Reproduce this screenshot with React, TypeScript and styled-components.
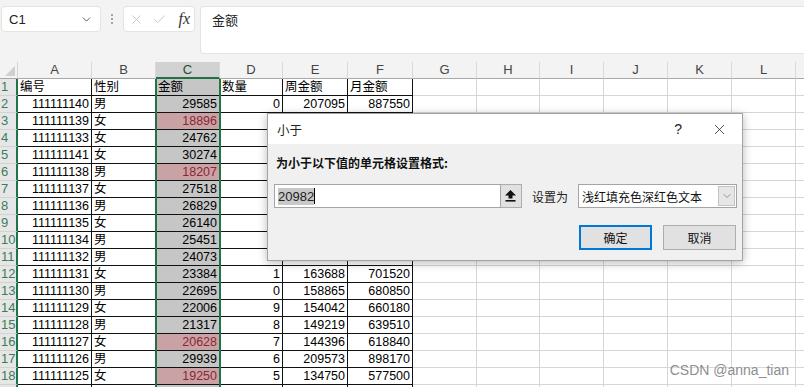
import React from 'react'
import styled, { createGlobalStyle } from 'styled-components'
import { ChevronDown, X, Check } from 'lucide-react'

const GlobalStyle = createGlobalStyle`
  html, body {
    margin: 0;
    padding: 0;
    background: #ffffff;
    overflow: hidden;
  }
  body {
    font-family: "Liberation Sans", "Noto Sans CJK SC", sans-serif;
  }
`

const COLS = [18, 74, 64, 64, 63, 65, 65, 64, 63, 64, 64, 64, 64, 20]
const LETTERS = ['A', 'B', 'C', 'D', 'E', 'F', 'G', 'H', 'I', 'J', 'K', 'L', '']
const HEADS = ['编号', '性别', '金额', '数量', '周金额', '月金额']

const ids = [140, 139, 133, 141, 138, 137, 136, 135, 134, 132, 131, 130, 129, 128, 127, 126, 125]
const sexes = ['男', '女', '女', '女', '男', '女', '男', '女', '男', '男', '女', '男', '女', '男', '女', '男', '女']
const amounts = [29585, 18896, 24762, 30274, 18207, 27518, 26829, 26140, 25451, 24073, 23384, 22695, 22006, 21317, 20628, 29939, 19250]
const qty = [0, 0, 9, 8, 7, 6, 5, 4, 3, 2, 1, 0, 9, 8, 7, 6, 5]

// rows 3..10 of D-F sit fully under the dialog
const hidden = (r: number) => r >= 1 && r <= 8

type Fill = 'none' | 'sel' | 'red'

export default function App() {
  return (
    <Page>
      <GlobalStyle />
      <FormulaBar>
        <NameBox>
          <span>C1</span>
          <ChevronDown size={13} strokeWidth={1.6} color="#444" />
        </NameBox>
        <Dots>
          <i />
          <i />
          <i />
        </Dots>
        <FxBox>
          <X size={15} strokeWidth={1.3} color="#bdbdbd" />
          <Check size={15} strokeWidth={1.3} color="#bdbdbd" />
          <Fx>fx</Fx>
        </FxBox>
        <FormulaInput>金额</FormulaInput>
      </FormulaBar>

      <SheetArea>
        <Grid>
          <Corner>
            <svg width="10" height="10" viewBox="0 0 10 10">
              <polygon points="10,0 10,10 0,10" fill="#cfcfcf" />
            </svg>
          </Corner>
          {LETTERS.map((l, i) => (
            <ColHead key={l + i} $active={l === 'C'}>
              {l}
            </ColHead>
          ))}

          <RowHead>1</RowHead>
          {HEADS.map((h, i) => (
            <Cell key={h} $dark $fill={i === 2 ? 'sel' : 'none'}>
              {h}
            </Cell>
          ))}
          {LETTERS.slice(6).map((l, i) => (
            <Cell key={'e1' + i} />
          ))}

          {ids.map((id, r) => {
            const amt = amounts[r]
            const fill: Fill = amt < 20982 ? 'red' : 'sel'
            const under = hidden(r)
            return (
              <React.Fragment key={id}>
                <RowHead>{r + 2}</RowHead>
                <Cell $dark $right>
                  {'111111' + id}
                </Cell>
                <Cell $dark>{sexes[r]}</Cell>
                <Cell $dark $right $fill={fill}>
                  {amt}
                </Cell>
                <Cell $dark $right>
                  {under ? '' : qty[r]}
                </Cell>
                <Cell $dark $right>
                  {under ? '' : amt * 7}
                </Cell>
                <Cell $dark $right>
                  {under ? '' : amt * 30}
                </Cell>
                {LETTERS.slice(6).map((l, i) => (
                  <Cell key={'e' + r + i} />
                ))}
              </React.Fragment>
            )
          })}

          <RowHead />
          {HEADS.map((h, i) => (
            <Cell key={'r19' + h} $dark $fill={i === 2 ? 'sel' : 'none'} />
          ))}
          {LETTERS.slice(6).map((l, i) => (
            <Cell key={'e19' + i} />
          ))}
        </Grid>

        <Selection />

        <Dialog>
          <TitleBar>
            <Title>小于</Title>
            <TitleButtons>
              <Help>?</Help>
              <X size={17} strokeWidth={1.1} color="#222" />
            </TitleButtons>
          </TitleBar>
          <DialogBody>
            <Prompt>为小于以下值的单元格设置格式:</Prompt>
            <FieldRow>
              <ValueInput>
                <Selected>20982</Selected>
                <Caret />
              </ValueInput>
              <PickButton>
                <svg width="11" height="12" viewBox="0 0 11 12">
                  <polygon points="5.5,0 11,5.5 7.5,5.5 7.5,8.5 3.5,8.5 3.5,5.5 0,5.5" fill="#111" />
                  <rect x="0.5" y="10" width="10" height="1.6" fill="#111" />
                </svg>
              </PickButton>
              <FieldLabel>设置为</FieldLabel>
              <SelectBox>
                <span>浅红填充色深红色文本</span>
                <SelectArrow>
                  <ChevronDown size={12} strokeWidth={1.3} color="#666" />
                </SelectArrow>
              </SelectBox>
            </FieldRow>
            <ButtonRow>
              <DialogButton $primary>确定</DialogButton>
              <DialogButton>取消</DialogButton>
            </ButtonRow>
          </DialogBody>
        </Dialog>

        <Watermark>CSDN @anna_tian</Watermark>
      </SheetArea>
    </Page>
  )
}

const Page = styled.div`
  width: 804px;
  height: 387px;
  overflow: hidden;
  background: #ffffff;
`

const FormulaBar = styled.div`
  height: 62px;
  box-sizing: border-box;
  background: #f3f3f3;
  display: flex;
  align-items: flex-start;
  padding: 6px 0 0 1px;
`

const NameBox = styled.div`
  width: 100px;
  height: 26px;
  box-sizing: border-box;
  background: #fff;
  border: 1px solid #e3e3e3;
  border-radius: 4px;
  display: flex;
  align-items: center;
  justify-content: space-between;
  padding: 0 7px 0 7px;
  font-size: 13px;
  color: #222;
`

const Dots = styled.div`
  width: 22px;
  height: 26px;
  display: flex;
  flex-direction: column;
  align-items: center;
  justify-content: center;
  gap: 2px;

  i {
    width: 2px;
    height: 2px;
    background: #8a8a8a;
    border-radius: 1px;
  }
`

const FxBox = styled.div`
  width: 72px;
  height: 26px;
  box-sizing: border-box;
  background: #fff;
  border: 1px solid #e3e3e3;
  border-radius: 4px;
  display: flex;
  align-items: center;
  padding: 0 4px 0 5px;
  gap: 8px;
`

const Fx = styled.span`
  font-family: "Liberation Serif", serif;
  font-style: italic;
  font-size: 16px;
  color: #333;
  margin-left: auto;
`

const FormulaInput = styled.div`
  margin-left: 5px;
  flex: 1;
  height: 48px;
  box-sizing: border-box;
  background: #fff;
  border: 1px solid #e3e3e3;
  border-right: none;
  border-radius: 4px 0 0 4px;
  padding: 3px 0 0 11px;
  font-size: 13px;
  color: #222;
  font-family: "Noto Sans CJK SC", sans-serif;
`

const SheetArea = styled.div`
  position: relative;
`

const Grid = styled.div`
  display: grid;
  grid-template-columns: ${COLS.map((c) => c + 'px').join(' ')};
  grid-auto-rows: 17px;
`

const Corner = styled.div`
  background: #f3f3f3;
  border-bottom: 1px solid #a9a9a9;
  border-right: 1px solid #d5d5d5;
  box-sizing: border-box;
  display: flex;
  align-items: flex-end;
  justify-content: flex-end;
  padding: 0 2px 2px 0;
`

const ColHead = styled.div<{ $active?: boolean }>`
  box-sizing: border-box;
  background: ${(p) => (p.$active ? '#d2d2d2' : '#f3f3f3')};
  border-right: 1px solid #d9d9d9;
  border-bottom: ${(p) => (p.$active ? '2px solid #217346' : '1px solid #a9a9a9')};
  color: ${(p) => (p.$active ? '#1f4e35' : '#444')};
  font-size: 13px;
  line-height: 16px;
  text-align: center;
`

const RowHead = styled.div`
  box-sizing: border-box;
  background: #e6e6e6;
  border-right: 2px solid #217346;
  border-bottom: 1px solid #d2d2d2;
  color: #3a7d5c;
  font-size: 13px;
  line-height: 16px;
  padding-left: 1px;
  overflow: hidden;
  white-space: nowrap;
`

const Cell = styled.div<{ $dark?: boolean; $right?: boolean; $fill?: Fill }>`
  box-sizing: border-box;
  border-right: 1px solid ${(p) => (p.$dark ? '#111' : '#d6d6d6')};
  border-bottom: 1px solid ${(p) => (p.$dark ? '#111' : '#d6d6d6')};
  background: ${(p) => (p.$fill === 'red' ? '#c9a2a6' : p.$fill === 'sel' ? '#c6c6c6' : '#fff')};
  color: ${(p) => (p.$fill === 'red' ? '#8c2632' : '#000')};
  font-size: 12.5px;
  line-height: 16px;
  padding: 0 2px;
  text-align: ${(p) => (p.$right ? 'right' : 'left')};
  white-space: nowrap;
  overflow: hidden;
`

const Selection = styled.div`
  position: absolute;
  left: 155px;
  top: 17px;
  width: 66px;
  bottom: -10px;
  box-sizing: border-box;
  border-left: 2px solid #217346;
  border-right: 2px solid #217346;
  pointer-events: none;
`

const Dialog = styled.div`
  position: absolute;
  left: 267px;
  top: 51px;
  width: 476px;
  height: 148px;
  box-sizing: border-box;
  background: #f0f0f0;
  border: 1px solid #a3a3a3;
  box-shadow: 0 2px 9px rgba(0, 0, 0, 0.28);
  display: flex;
  flex-direction: column;
  font-family: "Noto Sans CJK SC", sans-serif;
  font-size: 12px;
  color: #111;
`

const TitleBar = styled.div`
  height: 30px;
  background: #fff;
  display: flex;
  align-items: center;
  justify-content: space-between;
  padding: 0 14px 0 9px;
`

const Title = styled.span`
  font-size: 12.5px;
  color: #222;
`

const TitleButtons = styled.div`
  display: flex;
  align-items: center;
  gap: 29px;
`

const Help = styled.span`
  font-family: "Liberation Sans", sans-serif;
  font-size: 14px;
  color: #222;
`

const DialogBody = styled.div`
  flex: 1;
  display: flex;
  flex-direction: column;
  padding: 10px 5px 0 6px;
`

const Prompt = styled.div`
  font-weight: bold;
  font-size: 12px;
  line-height: 17px;
  padding-left: 2px;
`

const FieldRow = styled.div`
  display: flex;
  align-items: center;
  margin-top: 13px;
  height: 24px;
`

const ValueInput = styled.div`
  width: 227px;
  height: 24px;
  box-sizing: border-box;
  background: #fff;
  border: 1px solid #a5a5a5;
  display: flex;
  align-items: center;
  padding-left: 3px;
`

const Selected = styled.span`
  font-family: "Liberation Sans", sans-serif;
  font-size: 13px;
  line-height: 17px;
  background: #c8c8c8;
  color: #222;
`

const Caret = styled.span`
  width: 1px;
  height: 16px;
  background: #000;
`

const PickButton = styled.div`
  width: 21px;
  height: 24px;
  box-sizing: border-box;
  background: #e1e1e1;
  border: 1px solid #adadad;
  border-left: none;
  display: flex;
  align-items: center;
  justify-content: center;
`

const FieldLabel = styled.span`
  margin: 0 10px 0 10px;
  color: #222;
`

const SelectBox = styled.div`
  width: 159px;
  height: 24px;
  box-sizing: border-box;
  background: #fff;
  border: 1px solid #a5a5a5;
  display: flex;
  align-items: center;
  justify-content: space-between;
  padding: 0 1px 0 3px;
`

const SelectArrow = styled.div`
  width: 17px;
  height: 20px;
  box-sizing: border-box;
  background: #e6e6e6;
  border: 1px solid #c4c4c4;
  display: flex;
  align-items: center;
  justify-content: center;
`

const ButtonRow = styled.div`
  display: flex;
  justify-content: flex-end;
  gap: 11px;
  margin-top: 17px;
  padding-right: 1px;
`

const DialogButton = styled.div<{ $primary?: boolean }>`
  width: 73px;
  height: 25px;
  box-sizing: border-box;
  background: #e1e1e1;
  border: ${(p) => (p.$primary ? '2px solid #0078d7' : '1px solid #adadad')};
  display: flex;
  align-items: center;
  justify-content: center;
  color: #111;
`

const Watermark = styled.div`
  position: absolute;
  right: 15px;
  top: 300px;
  font-family: "Liberation Sans", sans-serif;
  font-size: 14px;
  color: #8e8e8e;
  text-shadow: 0 0 2px #fff;
`
